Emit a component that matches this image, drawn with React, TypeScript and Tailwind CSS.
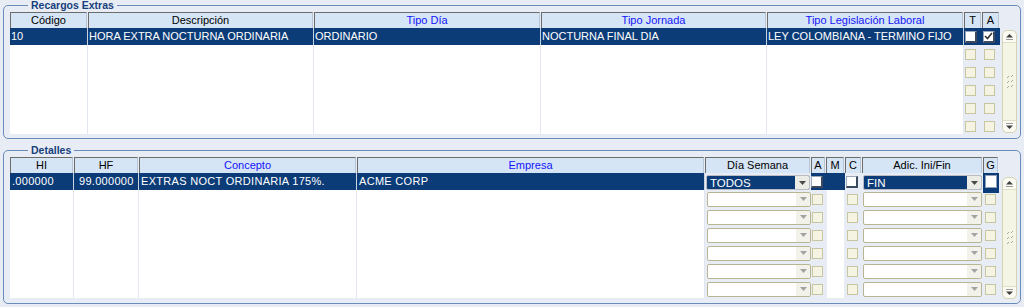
import React from "react";

const topCols = [
  { w: "w-[78px]", label: "Código", value: "10" },
  { w: "w-[226px]", label: "Descripción", value: "HORA EXTRA NOCTURNA ORDINARIA" },
  { w: "w-[227px]", label: "Tipo Día", value: "ORDINARIO", blue: true },
  { w: "w-[226px]", label: "Tipo Jornada", value: "NOCTURNA FINAL DIA", blue: true },
  { w: "w-[197px]", label: "Tipo Legislación Laboral", value: "LEY COLOMBIANA - TERMINO FIJO", blue: true },
];

const bottomCols = [
  { w: "w-[64px]", label: "HI", value: ".000000" },
  { w: "w-[65px]", label: "HF", value: "99.000000", right: true },
  { w: "w-[218px]", label: "Concepto", value: "EXTRAS NOCT ORDINARIA 175%.", blue: true },
  { w: "w-[348px]", label: "Empresa", value: "ACME CORP", blue: true },
];

function HeadCell({ w, label, blue }: { w: string; label: string; blue?: boolean }) {
  return (
    <div className={`${w} shrink-0 pr-px`}>
      <div
        className={`h-[16px] border-t border-l border-[#6c6c6c] border-r border-r-[#b7c4d4] bg-[#d6e5f5] text-center leading-[15px] whitespace-nowrap ${
          blue ? "text-[#1414ff]" : "text-black"
        }`}
      >
        {label}
      </div>
    </div>
  );
}

function Box({ kind }: { kind: "empty" | "white" | "checked" }) {
  if (kind === "empty") {
    return <div className="h-[11px] w-[11px] border border-[#c8c6a0] bg-[#f5f4e3]" />;
  }
  return (
    <div className="flex h-[12px] w-[12px] items-center justify-center border border-[#9aa8ba] border-r-2 border-b-2 border-r-[#3d4a5e] border-b-[#3d4a5e] bg-white">
      {kind === "checked" && (
        <svg width="9" height="8" viewBox="0 0 9 8">
          <path d="M1 4 L3.5 6.5 L8 1" fill="none" stroke="#333" strokeWidth="1.6" />
        </svg>
      )}
    </div>
  );
}

function Arrow({ dark }: { dark?: boolean }) {
  return (
    <svg width="7" height="4" viewBox="0 0 7 4">
      <path d="M0 0 L7 0 L3.5 4 Z" fill={dark ? "#4a4a4a" : "#a3a3a3"} />
    </svg>
  );
}

function Combo({ w, value, selected }: { w: string; value?: string; selected?: boolean }) {
  return (
    <div
      className={`${w} flex h-[15px] overflow-hidden rounded-[2px] border ${
        selected ? "border-[#b9bcc4] bg-[#0c3c78] text-white" : "border-[#b8b592] bg-white"
      }`}
    >
      <div className="flex-1 pl-[3px] leading-[15px] text-[11.5px]">{value}</div>
      <div className={`flex w-[14px] items-center justify-center ${selected ? "bg-[#ecece6]" : "bg-[#f2f2ea]"}`}>
        <Arrow dark={selected} />
      </div>
    </div>
  );
}

function Scroll({ h }: { h: string }) {
  return (
    <div className={`${h} flex w-[15px] flex-col justify-between rounded-[5px] border border-[#d5d3b5] bg-[#f5f5e6]`}>
      <div className="flex h-[12px] items-center justify-center rounded-t-[5px] border-b border-[#e0dec6] bg-[#fbfbf4]">
        <svg width="9" height="7" viewBox="0 0 9 7">
          <path d="M1 4.5 L4.5 1 L8 4.5 Z" fill="#3f3f3f" />
          <path d="M1 6.5 H8" stroke="#9a9a9a" strokeWidth="1" />
        </svg>
      </div>
      <div className="flex justify-center">
        <svg width="8" height="16" viewBox="0 0 8 16">
          {[1, 6, 11].map((y) => (
            <g key={y} stroke="#a8a8a0" strokeWidth="1">
              <path d={`M1 ${y + 3} L3 ${y + 1}`} />
              <path d={`M5 ${y + 2} L7 ${y}`} />
            </g>
          ))}
        </svg>
      </div>
      <div className="flex h-[12px] items-center justify-center rounded-b-[5px] border-t border-[#e0dec6] bg-[#fbfbf4]">
        <svg width="9" height="7" viewBox="0 0 9 7">
          <path d="M1 0.5 H8" stroke="#9a9a9a" strokeWidth="1" />
          <path d="M1 2.5 L4.5 6 L8 2.5 Z" fill="#3f3f3f" />
        </svg>
      </div>
    </div>
  );
}

function Legend({ children }: { children: React.ReactNode }) {
  return (
    <legend className="ml-[18px] px-[3px] text-[10.5px] font-bold leading-[11px] text-[#173f7c]">{children}</legend>
  );
}

export default function App() {
  const emptyTop = [0, 1, 2, 3, 4];
  const emptyBottom = [0, 1, 2, 3, 4, 5];

  return (
    <div className="h-[307px] w-[1024px] overflow-hidden bg-[#e8edf5] font-['Liberation_Sans',Arial,sans-serif] text-[11px] text-black">
      {/* Recargos Extras */}
      <fieldset className="mx-[3px] h-[139px] rounded-[5px] border border-[#6a8cb8] pl-[6px]">
        <Legend>Recargos Extras</Legend>
        <div className="mt-px flex">
          <div className="w-[990px]">
            <div className="flex">
              {topCols.map((c) => (
                <HeadCell key={c.label} {...c} />
              ))}
              <HeadCell w="w-[18px]" label="T" />
              <HeadCell w="w-[18px]" label="A" />
            </div>
            <div className="h-[106px] overflow-hidden">
              <div className="flex h-[17px]">
                {topCols.map((c) => (
                  <div
                    key={c.label}
                    className={`${c.w} shrink-0 overflow-hidden whitespace-nowrap border-r border-[#c9d2df] bg-[#0c3c78] pl-[1px] text-[11px] leading-[17px] text-white`}
                  >
                    {c.value}
                  </div>
                ))}
                <div className="flex w-[18px] items-center bg-[#0c3c78] pl-px">
                  <Box kind="white" />
                </div>
                <div className="flex w-[18px] items-center bg-[#0c3c78] pl-px">
                  <Box kind="checked" />
                </div>
              </div>
              {emptyTop.map((r) => (
                <div key={r} className="flex h-[18px]">
                  {topCols.map((c) => (
                    <div key={c.label} className={`${c.w} shrink-0 border-r border-[#e2e6ee] bg-white`} />
                  ))}
                  <div className="flex w-[18px] items-center pl-px">
                    <Box kind="empty" />
                  </div>
                  <div className="flex w-[18px] items-center pl-[2px]">
                    <Box kind="empty" />
                  </div>
                </div>
              ))}
            </div>
          </div>
          <div className="ml-[2px] mt-[18px]">
            <Scroll h="h-[103px]" />
          </div>
        </div>
      </fieldset>

      {/* Detalles */}
      <fieldset className="mx-[3px] mt-[6px] h-[159px] rounded-[5px] border border-[#6a8cb8] pl-[6px]">
        <Legend>Detalles</Legend>
        <div className="mt-px flex">
          <div className="w-[989px]">
            <div className="flex">
              {bottomCols.map((c) => (
                <HeadCell key={c.label} {...c} />
              ))}
              <HeadCell w="w-[106px]" label="Día Semana" />
              <HeadCell w="w-[15px]" label="A" />
              <HeadCell w="w-[19px]" label="M" />
              <HeadCell w="w-[17px]" label="C" />
              <HeadCell w="w-[121px]" label="Adic. Ini/Fin" />
              <HeadCell w="w-[16px]" label="G" />
            </div>
            <div className="h-[125px] overflow-hidden">
              <div className="flex h-[17px]">
                {bottomCols.map((c) => (
                  <div
                    key={c.label}
                    className={`${c.w} shrink-0 overflow-hidden whitespace-nowrap border-r border-[#c9d2df] bg-[#0c3c78] text-[11px] tracking-[0.3px] leading-[17px] text-white ${
                      c.right ? "pl-[5px]" : "pl-[2px]"
                    }`}
                  >
                    {c.value}
                  </div>
                ))}
                <div className="flex w-[106px] items-end pl-px">
                  <Combo w="w-[104px]" value="TODOS" selected />
                </div>
                <div className="flex w-[15px] items-center bg-[#0c3c78]">
                  <Box kind="white" />
                </div>
                <div className="w-[19px] bg-[#0c3c78]" />
                <div className="flex w-[17px] items-center pl-px">
                  <Box kind="white" />
                </div>
                <div className="flex w-[121px] items-end pl-px">
                  <Combo w="w-[119px]" value="FIN" selected />
                </div>
                <div className="flex h-[20px] w-[16px] items-start bg-[#0c3c78] px-[2px] pt-[2px]">
                  <div className="h-[13px] w-[12px] border border-[#8fa0b8] bg-white" />
                </div>
              </div>
              {emptyBottom.map((r) => (
                <div key={r} className="flex h-[18px]">
                  {bottomCols.map((c) => (
                    <div key={c.label} className={`${c.w} shrink-0 border-r border-[#e2e6ee] bg-white`} />
                  ))}
                  <div className="flex w-[106px] items-center pl-[2px]">
                    <Combo w="w-[104px]" />
                  </div>
                  <div className="flex w-[15px] items-center pl-px">
                    <Box kind="empty" />
                  </div>
                  <div className="w-[19px] px-px">
                    <div className="h-full bg-white" />
                  </div>
                  <div className="flex w-[17px] items-center pl-[2px]">
                    <Box kind="empty" />
                  </div>
                  <div className="flex w-[121px] items-center pl-px">
                    <Combo w="w-[119px]" />
                  </div>
                  <div className="flex w-[16px] items-center pl-[2px]">
                    <Box kind="empty" />
                  </div>
                </div>
              ))}
            </div>
          </div>
          <div className="ml-[3px] mt-[20px]">
            <Scroll h="h-[122px]" />
          </div>
        </div>
      </fieldset>
    </div>
  );
}
